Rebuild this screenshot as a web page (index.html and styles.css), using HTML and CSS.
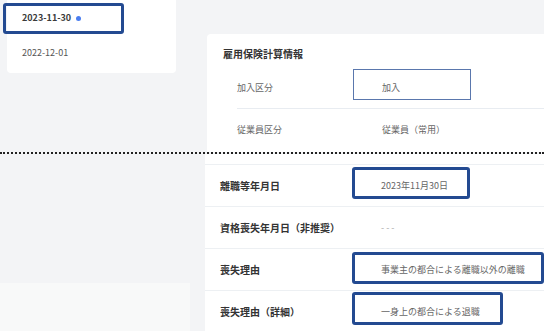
FILE: index.html
```html
<!DOCTYPE html>
<html lang="ja">
<head>
<meta charset="utf-8">
<link rel="stylesheet" href="styles.css">
</head>
<body>
<div class="page">
  <section class="top">
    <div class="history">
      <div class="hist-item current">
        <span class="hist-date">2023-11-30</span><span class="dot"></span>
        <span class="mark mark-hist"></span>
      </div>
      <div class="hist-item">
        <span class="hist-date old">2022-12-01</span>
      </div>
    </div>
    <div class="card info">
      <h2 class="card-title">雇用保険計算情報</h2>
      <div class="rows">
        <div class="row">
          <div class="label">加入区分</div>
          <div class="value">加入<span class="mark thin mark-join"></span></div>
        </div>
        <div class="row">
          <div class="label">従業員区分</div>
          <div class="value">従業員（常用）</div>
        </div>
      </div>
    </div>
  </section>
  <div class="cut"></div>
  <section class="bottom">
    <div class="side">
      <div class="side-panel"></div>
    </div>
    <div class="card detail">
      <div class="drow">
        <div class="dlabel">離職等年月日</div>
        <div class="dvalue">2023年11月30日<span class="mark mark-a"></span></div>
      </div>
      <div class="drow">
        <div class="dlabel">資格喪失年月日（非推奨）</div>
        <div class="dvalue muted">- - -</div>
      </div>
      <div class="drow">
        <div class="dlabel">喪失理由</div>
        <div class="dvalue">事業主の都合による離職以外の離職<span class="mark mark-b"></span></div>
      </div>
      <div class="drow">
        <div class="dlabel">喪失理由（詳細）</div>
        <div class="dvalue">一身上の都合による退職<span class="mark mark-c"></span></div>
      </div>
    </div>
  </section>
</div>
</body>
</html>
```

FILE: styles.css
```css
* { box-sizing: border-box; }
html, body {
  margin: 0;
  padding: 0;
}
body {
  background: #f3f4f6;
  font-family: "Noto Sans CJK JP", "Noto Sans", sans-serif;
  color: #333;
  width: 544px;
  height: 331px;
  overflow: hidden;
}
.page {
  width: 544px;
  height: 331px;
  display: flex;
  flex-direction: column;
}
.top {
  display: flex;
  height: 152px;
  flex: none;
}
.history {
  width: 169px;
  margin-left: 7px;
  height: 73px;
  background: #fff;
  border-radius: 0 0 4px 4px;
  flex: none;
}
.hist-item {
  position: relative;
  height: 35px;
  display: flex;
  align-items: center;
  padding-left: 15px;
}
.hist-item + .hist-item {
  height: 34px;
}
.hist-date {
  font-size: 9px;
  font-weight: 700;
  color: #3a3a3a;
}
.hist-date.old {
  font-weight: 400;
  color: #555;
}
.dot {
  width: 5px;
  height: 5px;
  border-radius: 50%;
  background: #4a7ef0;
  margin-left: 5px;
  margin-top: 2px;
}
.mark {
  position: absolute;
  border: 3px solid #234a91;
  border-radius: 3px;
  pointer-events: none;
}
.mark.thin {
  border: 1px solid #5a77ad;
  border-radius: 0;
}
.mark-hist {
  left: -4px;
  top: 3px;
  width: 121px;
  height: 31px;
}
.card {
  background: #fff;
}
.info {
  flex: 1;
  margin-left: 31px;
  margin-top: 34px;
  border-top-left-radius: 4px;
  padding: 13px 0 0 16px;
}
.card-title {
  margin: 0 0 6px;
  font-size: 10px;
  line-height: 14px;
  font-weight: 700;
  color: #333;
}
.rows {
  padding-left: 14px;
}
.row {
  display: flex;
  align-items: center;
  height: 41px;
}
.row + .row {
  border-top: 1px solid #e8ecf1;
  height: 42px;
}
.label {
  width: 145px;
  font-size: 9px;
  color: #666;
}
.value {
  position: relative;
  font-size: 9px;
  color: #666;
}
.mark-join {
  left: -29px;
  top: -12px;
  width: 118px;
  height: 31px;
}
.cut {
  flex: none;
  height: 0;
  border-top: 2px dotted #222;
}
.bottom {
  flex: 1;
  display: flex;
}
.side {
  width: 190px;
  flex: none;
  padding-top: 129px;
}
.side-panel {
  height: 100%;
  background: #f8f9f9;
}
.detail {
  flex: 1;
  margin-left: 15px;
  padding-top: 10px;
}
.drow {
  display: flex;
  align-items: center;
  height: 42px;
  border-top: 1px solid #edf0f3;
  padding-left: 15px;
}
.dlabel {
  width: 161px;
  font-size: 10px;
  font-weight: 700;
  color: #333;
}
.dvalue {
  position: relative;
  font-size: 9px;
  color: #666;
}
.dvalue.muted {
  color: #aaa;
}
.mark-a {
  left: -29px;
  top: -12px;
  width: 118px;
  height: 32px;
}
.mark-b {
  left: -29px;
  top: -11px;
  width: 192px;
  height: 32px;
}
.mark-c {
  left: -29px;
  top: -13px;
  width: 151px;
  height: 33px;
}
```
